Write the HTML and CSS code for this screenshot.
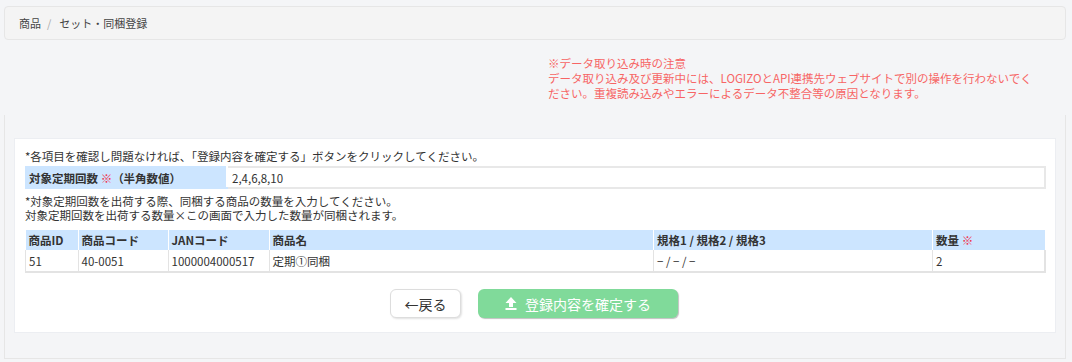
FILE: index.html
```html
<!DOCTYPE html>
<html lang="ja">
<head>
  <meta charset="UTF-8">
  <title>セット・同梱登録</title>
  <link rel="stylesheet" href="styles.css">
</head>
<body>
  <div class="breadcrumb">
    <span class="crumb">商品</span>
    <span class="sep">/</span>
    <span class="crumb current">セット・同梱登録</span>
  </div>

  <div class="notice">
    ※データ取り込み時の注意<br>
    データ取り込み及び更新中には、LOGIZOとAPI連携先ウェブサイトで別の操作を行わないでく<br>
    ださい。重複読み込みやエラーによるデータ不整合等の原因となります。
  </div>

  <div class="content">
    <div class="panel">
      <p class="note lead">*各項目を確認し問題なければ、「登録内容を確定する」ボタンをクリックしてください。</p>

      <table class="form-table">
        <tr>
          <th>対象定期回数 <span class="req">※</span>（半角数値）</th>
          <td>2,4,6,8,10</td>
        </tr>
      </table>

      <p class="note">*対象定期回数を出荷する際、同梱する商品の数量を入力してください。</p>
      <p class="note">対象定期回数を出荷する数量×この画面で入力した数量が同梱されます。</p>

      <table class="item-table">
        <tr>
          <th class="c-id">商品ID</th>
          <th class="c-code">商品コード</th>
          <th class="c-jan">JANコード</th>
          <th class="c-name">商品名</th>
          <th class="c-spec">規格1 / 規格2 / 規格3</th>
          <th class="c-qty">数量 <span class="req">※</span></th>
        </tr>
        <tr>
          <td>51</td>
          <td>40-0051</td>
          <td>1000004000517</td>
          <td>定期①同梱</td>
          <td>− / − / −</td>
          <td>2</td>
        </tr>
      </table>

      <div class="actions">
        <button class="btn btn-back">&larr;戻る</button>
        <button class="btn btn-submit">
          <svg width="12" height="13" viewBox="0 0 12 13"><path d="M6 0 L11.5 6 H8 V10 H4 V6 H0.5 Z" fill="#fff"/><rect x="0.5" y="11" width="11" height="2" fill="#fff"/></svg>
          登録内容を確定する
        </button>
      </div>
    </div>
  </div>
</body>
</html>
```

FILE: styles.css
```css
body {
  margin: 0;
  background-color: #f4f5f7;
  font-family: "Noto Sans CJK JP", "Noto Sans", sans-serif;
  color: #333;
  font-size: 11.5px;
}
.breadcrumb {
  margin: 6px 6px 0 4px;
  height: 34px;
  box-sizing: border-box;
  background: #f4f4f4;
  border: 1px solid #e6e6e6;
  border-radius: 4px;
  padding-left: 14px;
  display: flex;
  align-items: center;
  font-size: 11px;
  color: #444;
}
.sep {
  color: #aaa;
  margin: 0 8px 0 6px;
}
.notice {
  margin: 16px 0 0 548px;
  color: #f76565;
  font-size: 11.5px;
  line-height: 15px;
  white-space: nowrap;
}
.content {
  margin: 14px 6px 0 4px;
  border: 1px solid #e6e6e6;
  border-top: none;
  padding: 23px 9px 25px 9px;
}
.panel {
  background: #fff;
  border: 1px solid #eceef2;
  padding: 9px 9px 14px 10px;
}
.note {
  margin: 0;
  height: 14px;
  line-height: 14px;
}
.note.lead {
  height: 16px;
  line-height: 16px;
  margin-bottom: 2px;
}
table {
  border-collapse: collapse;
  width: 100%;
}
.form-table {
  margin-bottom: 5px;
}
.form-table th {
  width: 193px;
  background: #cce5ff;
  text-align: left;
  font-weight: bold;
  height: 19px;
  padding: 0 4px;
  border-top: 2px solid #cce5ff;
  border-bottom: 2px solid #cce5ff;
  border-right: 2px solid #fff;
}
.form-table td {
  height: 19px;
  padding: 0 4px;
  border: 2px solid #e8e8e8;
  border-left: none;
}
.req {
  color: #f0304a;
  font-weight: normal;
}
.item-table {
  margin-top: 8px;
}
.item-table th {
  background: #cce5ff;
  text-align: left;
  font-weight: bold;
  height: 20px;
  padding: 0 3px;
  border-left: 1px solid #fff;
}
.item-table th:first-child {
  border-left: none;
}
.item-table td {
  height: 21px;
  padding: 0 3px;
  border: 1px solid #e3e3e3;
  border-top: none;
  border-bottom-width: 2px;
}
.item-table td:last-child {
  border-right-width: 2px;
}
.c-id { width: 46px; }
.c-code { width: 83px; }
.c-jan { width: 94px; }
.c-spec { width: 272px; }
.c-qty { width: 106px; }
.actions {
  display: flex;
  justify-content: center;
  gap: 17px;
  margin-top: 16px;
  padding-right: 3px;
}
.btn {
  font-family: "Noto Sans CJK JP", "Noto Sans", sans-serif;
  font-size: 14px;
  height: 29px;
  border-radius: 6px;
  cursor: pointer;
  display: flex;
  align-items: center;
  justify-content: center;
}
.btn-back {
  width: 71px;
  background: #fff;
  color: #333;
  border: 1px solid #ddd;
  box-shadow: 1px 1px 2px rgba(0,0,0,0.12);
}
.btn-submit {
  width: 200px;
  background: #80da9a;
  color: #fff;
  border: none;
  box-shadow: 1px 1px 1px rgba(0,0,0,0.25);
  gap: 8px;
}
```
